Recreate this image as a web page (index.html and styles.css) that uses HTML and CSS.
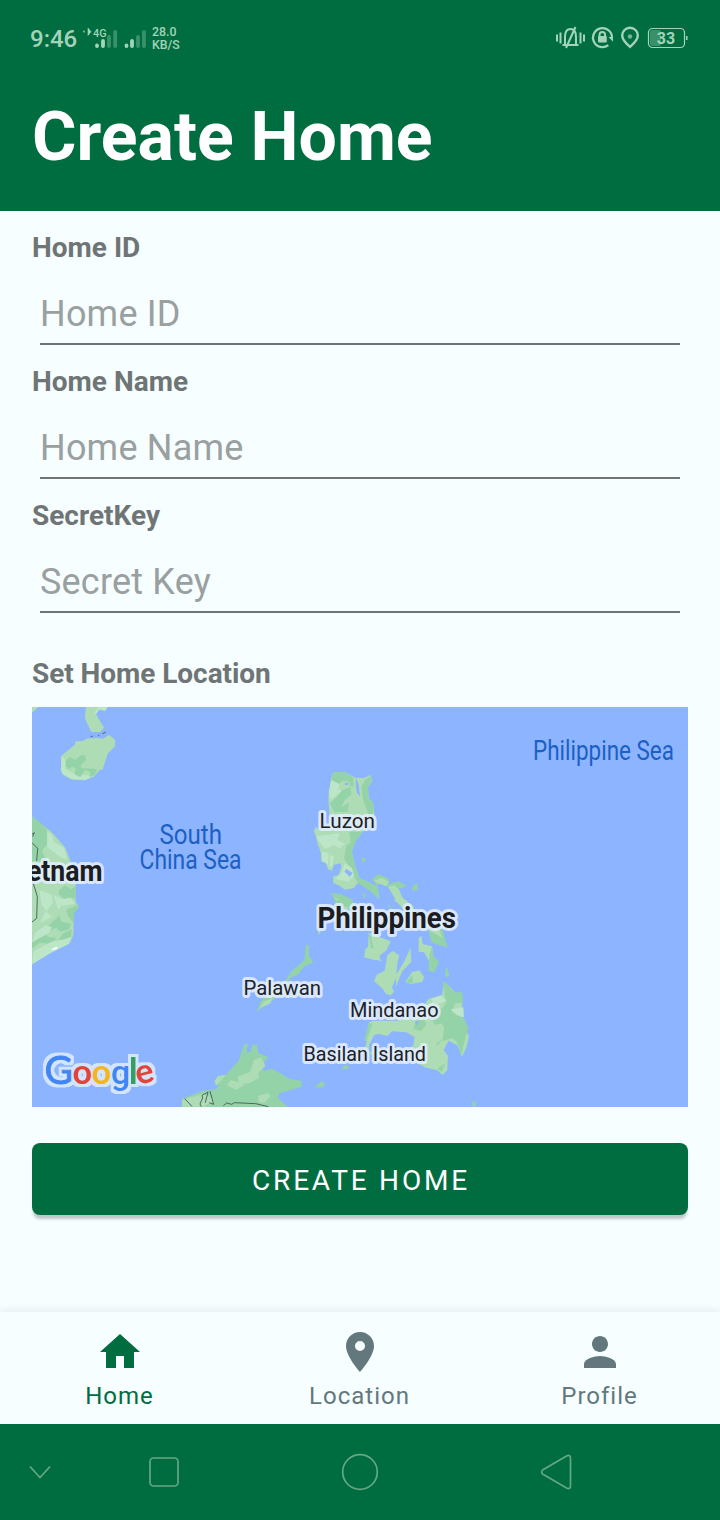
FILE: index.html
```html
<!DOCTYPE html>
<html lang="en">
<head>
<meta charset="utf-8">
<title>Create Home</title>
<link rel="stylesheet" href="styles.css">
</head>
<body>
<div class="screen">
  <header class="header">
    <div class="status">
      <div class="status-left">
        <span class="time">9:46</span>
        <svg class="signals" width="66" height="28" viewBox="82 24 66 28">
          <path d="M84.500 30.500l-1.500 1 1.500 1M88 28v7.500l3-3.800z" class="ink" stroke="#a3d3b9" stroke-width=".6"/>
          <text x="93" y="37" class="net" textLength="13.500" lengthAdjust="spacingAndGlyphs">4G</text>
          <g stroke-width="3.800" stroke-linecap="round" class="bar">
            <path d="M97 45.500v.5M103 41v5M126.500 45.500v.5M132 41v5"/>
            <path opacity=".35" d="M109 37v9M115.200 32v14M138 37v9M144 32v14"/>
          </g>
        </svg>
        <span class="rate">28.0<br>KB/S</span>
      </div>
      <svg class="status-icons" width="134" height="28" viewBox="555 24 134 28">
        <g class="line" stroke-width="2">
          <path d="M557 34.500v7M560.500 32.500v11M580.500 32.500v11M584 34.500v7"/>
          <path d="M562.500 45h16M565 45v-8c0-5 2-8 5.500-8s5.500 3 5.500 8v8M575.500 27l-9.500 21"/>
          <path d="M608.300 45.200a9.500 9.500 0 1 1 3.700-7.700" stroke-width="2.200"/>
          <path d="M599.500 37v-2.200a2.800 2.800 0 0 1 5.600 0V37"/>
          <path d="M630 46.800c-3.500-3.200-7.800-6.500-7.800-11.300a7.800 7.800 0 0 1 15.600 0c0 4.800-4.300 8.100-7.800 11.300z" stroke-width="2.400"/>
          <rect x="648.500" y="28.500" width="36" height="19" rx="4" stroke-width="1.200"/>
        </g>
        <g class="ink"><rect x="598" y="36" width="8.800" height="6.500" rx="1"/><path d="M608.500 37h4.500v4.800z"/><path d="M686 36h1.500v4H686z"/></g>
        <circle cx="630" cy="36.500" r="2.200" class="ink" opacity=".7"/>
        <rect x="650" y="30" width="11" height="16" rx="2" class="charge"/>
        <text x="666" y="44.300" text-anchor="middle" class="battery" textLength="18.500">33</text>
      </svg>
    </div>
    <h1 class="title">Create Home</h1>
  </header>

  <main class="form">
    <div class="field"><label class="label" for="hid">Home ID</label><input class="input" id="hid" placeholder="Home ID"></div>
    <div class="field"><label class="label" for="hname">Home Name</label><input class="input" id="hname" placeholder="Home Name"></div>
    <div class="field"><label class="label" for="key">SecretKey</label><input class="input" id="key" placeholder="Secret Key"></div>
    <p class="label location-label">Set Home Location</p>

    <svg class="map" viewBox="32 707 656 400" width="656" height="400">
      <filter id="halo" x="-10%" y="-20%" width="120%" height="140%" color-interpolation-filters="sRGB">
        <feMorphology in="SourceAlpha" operator="dilate" radius="2.500" result="grown"/>
        <feGaussianBlur in="grown" stdDeviation=".5" result="soft"/>
        <feFlood flood-color="#d3e4fb"/>
        <feComposite in2="soft" operator="in" result="edge"/>
        <feMerge><feMergeNode in="edge"/><feMergeNode in="SourceGraphic"/></feMerge>
      </filter>
      <rect x="32" y="707" width="656" height="400" fill="#8cb4ff"/>
      <!-- Hainan and the Vietnamese coast -->
      <g transform="translate(30 700) scale(.33333)">
        <path class="land" d="M0 20h26L6 38zM168 20h66l-10 12-18-3-8 14 24 40-12 13h-26l-20-42z"/>
        <path class="pale" d="M205 22h28l-8 10-17-4-10 15-6-5z"/>
        <path class="land" d="M94 167l40-32 3-11h21l10-8 34-2 18 2 17-12 18 15v20l-22 22-15 48h-8l-19 22-24 8-4 2-38-2-27-15-6-12z"/>
        <path class="pale" d="M94 167l12 12v28l22 12 60 10-20 10-41-2-27-14-6-14z"/>
        <path class="dark" d="M107 182l13-11 16 8 17-13h12l4 14-17 16 2 9 48 2-8 17-14 8 1-15-16-8-14 23-18-10 5-17-11-5-11 7-9-8z"/>
        <path class="border" d="M182 109h6M204 106h4M217 101l10-4"/>
        <path class="land" d="M0 345l65 52 40 45 14 35 18 64v64l9 14-14 20-2 66-10 24-60 30-55 35z"/>
        <path class="dark" d="M0 345l50 40 1 48-15 20 14 30H0zM88 570l16-14 20 12 14-10v38l-22-4-12 6-18-16zM108 630l34-15 5 7-14 17-2 30-17-21zM52 680l36-34 6 19 29 6-6 16-26 8-12-12-24 10zM6 728l40-26 10 10 26 3-24 16-29-3-23 18zM100 700l25-12-2 24-23 12-20 4z"/>
        <path class="pale" d="M52 396l12 5 8 25 31 18 8 36-22-10-37-30zM28 570l35 12 7 25-22 28 18 15-36 20 18-38-14-21zM70 585l25 12 28-2 12 16-40 6-10 12zM16 698l30-22 20 6-10 18-50 26zM12 754l52-29 38-7 22-8-8 22-58 29-50 30v-18z"/>
        <path fill="#fff" d="M63 750l8-7 13-2-5 7z"/>
        <path class="border" d="M6 402l7-4-5 12M6 428l17 17-3 38M10 550l12 40-2 65-14 11"/>
      </g>
      <!-- Luzon and the Bicol peninsula -->
      <g transform="translate(290 760) scale(.33333)">
        <path class="land" d="M126 42L134 37 164 36 196 53 222 54 242 45 246 65 234 82 236 113 249 130 254 170 240 196 218 215 196 245 186 275 195 315 208 355 240 368 262 380 268 418 245 395 205 368 190 385 165 389 145 375 130 370 130 348 146 345 155 318 150 310 132 314 126 332 114 328 108 308 94 304 92 275 82 250 78 228 72 215 76 200 90 210 120 200 118 160 115 110z"/>
        <path class="dark" d="M126 42l8-5 30-1 25 16 2 30-10-4-4-14-20-2-18 20-14-20zM140 112l18-22 24-8 2 22-20 16-12 22 26-14-6 28-38 0-14-26zM226 60l16-12 2 18-10 16 2 31 14 18v24l-10 20-20-52-6-43zM178 215h40l-22 30-10 30 9 40 13 40 32 13 24 14 4 36-24-23-40-27-14-20-12-30-16-22 8-40 12-8z"/>
        <path class="pale" d="M124 60l24 12-4 16 12 4-34 28-6-24zM80 228l70-8-8 20 24 12-18 13-16-10-26 12-14-17-10-12zM96 275l20 4-2 35-8-6-10-4zM120 285l12 4-6 32-8-4zM164 310l22 14 7 23-19 18-38-8 20-20z"/>
        <path fill="#8cb4ff" d="M164 70l12-3-3 9-8-2zM198 54l8 20 4 35-9-10-4-25zM168 326l20 13-9 11-15-15z"/>
        <path class="dark" d="M214 293l14 2-8 17zM246 357l20-15 32 16-2 15 30-9 25 14-25 8 4 18 25 30 18 5-4 23-30-15-18-32-20-29-27-17-13 8zM370 375l14-6-2 22-16 1zM122 400l32 2 34 18 8 28-46 0zM216 398l13 6-7 12zM290 430l14 12 0 8z"/>
        <path class="land" d="M294 380l20-4 14 14 8 20 26 28-20 10-20-20zM252 362l24-9 20 12-7 14-25-10zM132 412l28 12 20 18-20 8z"/>
      </g>
      <!-- Visayas, Mindanao -->
      <g transform="translate(290 900) scale(.33333)">
        <path class="land" d="M236 98L302 124 290 150 268 168 273 185 262 180 252 180 222 172 226 148 234 140zM292 165L308 153 328 166 322 190 318 235 306 262 312 276 302 286 288 282 276 264 252 244 260 224 284 212zM362 143l2 42-28 30-18 45 0-35 24-40zM346 246l20-30 22-5 14 19-4 15-35 7zM386 115l8-8 4 25 28 7 6 42-14 3-16-27-16-2zM310 0h38l20 22-24 0z"/>
        <path class="dark" d="M236 104l6 0 8 40-6 4zM346 250l20-24 4 23zM413 82l44 4 16 57-49-16zM426 140l5 30 16 15-14 32-18-4 4-52zM466 210l6-10 6 30h-12zM130 0h30l25 24-42-8zM82 90h8v12z"/>
        <path class="land" d="M236 368l12-6 70 0 60-12 38-54 40-10 6-38 24 18 30 44-1 36 10 38 12 24-7 32-14 30-14-34-26-14-15 28 13 17-2 44-14 14-16-14-34-8-50-25-8-18 20-24 4-24-24-15-44-3-13 14-28-6-12 3-16 30 0 27-15-10 8-24z"/>
        <path class="dark" d="M458 242l20 15 14 22 24-5 4 34-26 2-8 27 38 21 12 27-10 27-13 55-12-40-15-13-28 10 4-44-8-10-20 4-20-42 2-18 40 12 12-18zM378 364l22-8 10 16-17 22-22-8zM438 433l22-18-18 22zM442 506l22-15-8 25zM236 370l12 0-20 57-5-7z"/>
        <path class="pale" d="M482 328l38-6 2 30-20-6zM426 296l26-10 18 16-26 10-18-4z"/>
        <path fill="#8cb4ff" d="M374 365l10-3 2 9-8 5z"/>
        <path class="dark" d="M154 507l14-14 12 11-13 4zM76 560l20-15 8 10-20 8zM546 602l10 4 1 14h-8zM236 457l12-5-4 14z"/>
        <path class="land" d="M405 84l43 5 9 24-25-13z"/>
      </g>
      <!-- Palawan and Borneo -->
      <g transform="translate(30 930) scale(.33333)">
        <path class="dark" d="M828 43l9 4v30l13 20-27 12-18 24-24 10-20 41-30 25-52 36 16-36 38-30 30-22 20-32 40-35z"/>
        <path class="land" d="M700 215l28-10-8 16-30 13zM862 0h12l-6 14z"/>
        <path class="dark" d="M456 530v-24l62-24 40-4 8-12-10-14 8-12 24-6 38-42 10-32 8-18 9 0-3 26 12-2 5-22h14l4 24 30 14-17 20 2 20 26-6 56 32 32 4 2 18-68 20-4 14 30 26-68 14z"/>
        <path class="land" d="M456 530v-20l60-18 18 4 20 18-35 16zM558 468l-4-16 10-14 24-3-16 17zM590 465l12-14 22 5 14-8 4 18-24 14zM622 440l38-14 12-36 22-8 12 26-22 20 4 16-26 14-34 6zM684 498l30-10 8 10-20 22-16-4z"/>
        <path class="dark" d="M854 472l20-18 10 6-4 12z"/>
        <path class="border" d="M464 506l22 23M514 530l-4-8 8-18-2-8 18-10-8 32M540 483l11 40-14-5M580 527l10-8 15 4 8-5 64 3 38 9"/>
      </g>
      <g class="sea">
        <text x="533" y="760" textLength="141" lengthAdjust="spacingAndGlyphs">Philippine Sea</text>
        <text x="159.500" y="844" textLength="62.500" lengthAdjust="spacingAndGlyphs">South</text>
        <text x="139.500" y="869" textLength="102" lengthAdjust="spacingAndGlyphs">China Sea</text>
      </g>
      <g class="country">
        <text x="27" y="881" textLength="75.500" lengthAdjust="spacingAndGlyphs">etnam</text>
        <text x="317.500" y="927.500" textLength="138.500" lengthAdjust="spacingAndGlyphs">Philippines</text>
      </g>
      <g class="island">
        <text x="319.500" y="828" textLength="55.500" lengthAdjust="spacingAndGlyphs">Luzon</text>
        <text x="243.500" y="995" textLength="77.500" lengthAdjust="spacingAndGlyphs">Palawan</text>
        <text x="350" y="1017" textLength="88.500" lengthAdjust="spacingAndGlyphs">Mindanao</text>
        <text x="303.500" y="1061" textLength="122.500" lengthAdjust="spacingAndGlyphs">Basilan Island</text>
      </g>
      <text class="brand" y="1083.500" filter="url(#halo)"><tspan class="brand-cap" x="44.500" fill="#4285f4">G</tspan><tspan x="72.500" fill="#e0443a">o</tspan><tspan x="91.500" fill="#f4b51e">o</tspan><tspan class="brand-g" x="111" fill="#4285f4">g</tspan><tspan class="brand-l" x="128.800" fill="#34a060">l</tspan><tspan x="138" dy="1.500" rotate="-14" fill="#e0443a">e</tspan></text>
    </svg>

    <button class="create" type="button">CREATE HOME</button>
  </main>

  <nav class="tabs">
    <a class="tab active"><svg width="48" height="48" viewBox="0 0 24 24"><path d="M10 20v-6h4v6h5v-8h3L12 3 2 12h3v8z"/></svg><span>Home</span></a>
    <a class="tab"><svg width="48" height="48" viewBox="0 0 24 24"><path d="M12 2C8.130 2 5 5.130 5 9c0 5.250 7 13 7 13s7-7.750 7-13c0-3.870-3.130-7-7-7zm0 9.500a2.500 2.500 0 0 1 0-5 2.500 2.500 0 0 1 0 5z"/></svg><span>Location</span></a>
    <a class="tab"><svg width="48" height="48" viewBox="0 0 24 24"><path d="M12 12c2.210 0 4-1.790 4-4s-1.790-4-4-4-4 1.790-4 4 1.790 4 4 4zm0 2c-2.670 0-8 1.340-8 4v2h16v-2c0-2.660-5.330-4-8-4z"/></svg><span>Profile</span></a>
  </nav>

  <footer class="system">
    <svg width="720" height="96" viewBox="0 1424 720 96">
      <path d="M30 1466.500l10 11 10-11"/>
      <rect x="150" y="1458" width="28" height="28" rx="3.500"/>
      <circle cx="360" cy="1472" r="17.300"/>
      <path d="M567 1455.800l-24 14q-3 2.200 0 4.400l24 14q3.500 1.300 3.500-2.500v-27.400q0-3.800-3.500-2.500z"/>
    </svg>
  </footer>
</div>
</body>
</html>
```
FILE: styles.css
```css
* { box-sizing: border-box; }
body { margin: 0; font-family: Roboto, sans-serif; background: #f6feff; }
.screen { width: 720px; height: 1520px; display: flex; flex-direction: column; background: #f6feff; overflow: hidden; }
.header { height: 211px; background: #006d40; flex: none; }
.status { height: 76px; padding: 0 31px 0 30px; display: flex; justify-content: space-between; align-items: center; color: #a3d3b9; }
.status-left { display: flex; align-items: center; }
.time { font-size: 24px; font-weight: 500; width: 52px; line-height: 28px; padding-top: 2px; }
.rate { margin-left: 4px; font-size: 12.300px; line-height: 13px; font-weight: 500; padding-top: 2px; }
.net { font-size: 11px; font-weight: 500; fill: #a3d3b9; }
.ink { fill: #a3d3b9; }
.bar, .line { fill: none; stroke: #a3d3b9; }
.charge { fill: #a3d3b9; opacity: .35; }
.battery { font-size: 16px; font-weight: 700; fill: #a3d3b9; }
.title { margin: 21px 0 0 32px; font-size: 68px; line-height: 80px; font-weight: 700; color: #fff; }
.form { padding: 20px 32px 0; flex: 1; display: flex; flex-direction: column; }
.field { display: flex; flex-direction: column; margin-bottom: 20px; }
.label { margin: 0; font-size: 28px; line-height: 33px; font-weight: 700; color: #6f7575; }
.input { margin: 0 8px; height: 81px; padding: 29px 0 8px; border: 0; border-bottom: 2px solid #6f7575; background: none; font: 36px/42px Roboto, sans-serif; letter-spacing: .2px; outline: 0; }
.input::placeholder { color: #9a9fa0; opacity: 1; }
.location-label { margin-top: 24px; letter-spacing: -.05px; }
.map { display: block; margin-top: 17px; flex: none; }
.land { fill: #addcb5; }
.dark { fill: #94d3a7; }
.pale { fill: #bde6c8; }
.border { fill: none; stroke: #4d6660; stroke-width: 3; }
.sea { font-size: 27px; fill: #1c60c4; }
.country { font-size: 29px; font-weight: 700; fill: #1c1d20; }
.island { font-size: 21px; fill: #202124; }
.country text, .island text { stroke: rgba(226, 238, 252, .88); stroke-width: 6px; stroke-linejoin: round; paint-order: stroke; }
.brand { font-family: Lato, sans-serif; font-size: 34px; font-weight: 700; }
.brand-cap { font-size: 39px; font-weight: 400; stroke: #4285f4; stroke-width: .9px; }
.brand-g { font-family: Roboto, sans-serif; font-weight: 500; }
.brand-l { font-size: 36px; }
.create { margin-top: 36px; height: 72px; flex: none; border: 0; border-radius: 8px; background: #006d40; color: #fff; font: 28px/33px Roboto, sans-serif; letter-spacing: 2.800px; padding: 3px 0 0 2px; box-shadow: 0 5px 3px -1px rgba(0, 0, 0, .22); }
.tabs { height: 112px; flex: none; display: grid; grid-template-columns: repeat(3, 1fr); background: #f6feff; box-shadow: 0 -2px 8px rgba(0, 0, 0, .07); }
.tab { display: flex; flex-direction: column; align-items: center; padding-top: 16px; color: #62787d; font-size: 24px; line-height: 28px; letter-spacing: 1px; }
.tab svg { fill: currentColor; }
.tab span { margin: 6px 1px 0 0; }
.active { color: #006d40; }
.system { height: 96px; flex: none; background: #006d40; }
.system svg { display: block; fill: none; stroke: #65a783; stroke-width: 1.700; }
```
